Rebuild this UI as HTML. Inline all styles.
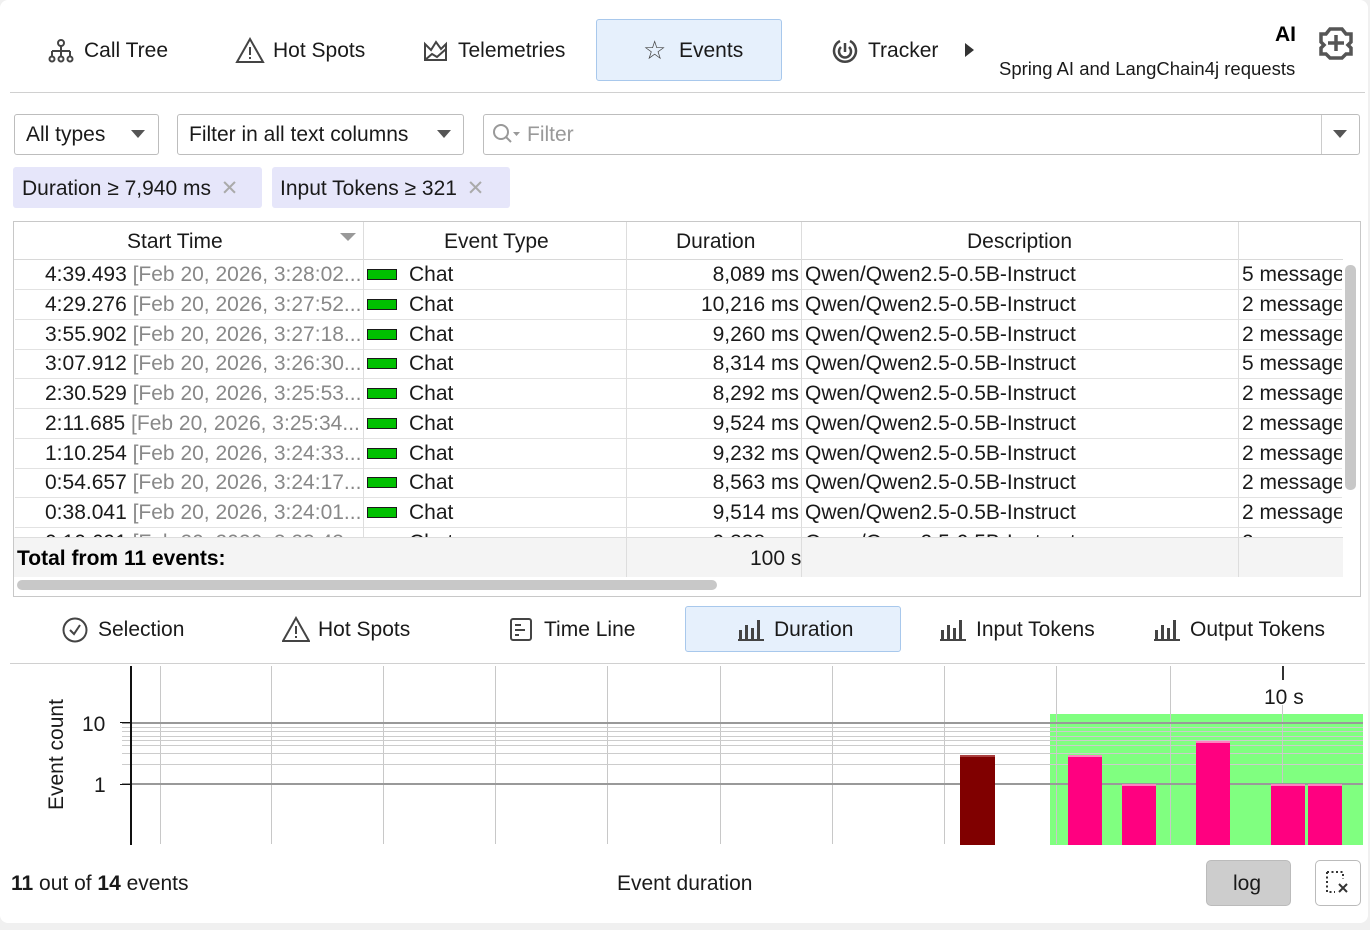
<!DOCTYPE html>
<html><head><meta charset="utf-8"><style>
*{box-sizing:border-box;margin:0;padding:0}
body{width:1370px;height:930px;background:#f0f0f0;font-family:"Liberation Sans",sans-serif;color:#1a1a1a;position:relative;overflow:hidden}
.a{position:absolute;white-space:nowrap}
.panel{position:absolute;left:0;top:0;width:1368px;height:923px;background:#fff;border-radius:8px}
.t{font-size:21px}
.box{position:absolute;border:1px solid #bdbdbd;border-radius:3px;background:#fff}
.row{position:absolute;left:15px;width:1327px;height:30px;border-bottom:1px solid #e2e2e2;font-size:21px;white-space:nowrap;overflow:hidden}
.row span{position:absolute;top:3px;white-space:nowrap}
.row span.d{right:543px;left:auto}
.g{color:#888}
.sw{position:absolute;left:352px;top:9px;width:30px;height:11px;background:#00c000;border:1.5px solid #1a1a1a}
.vl{position:absolute;top:666px;height:178px;width:1px;background:#c8c8c8}
.bar{position:absolute;background:#ff0080;border-top:2px solid #ff80c0}
</style></head><body>
<div class="panel"></div>
<svg class="a" style="left:48px;top:38px" width="26" height="26" viewBox="0 0 26 26" fill="none" stroke="#444" stroke-width="2"><circle cx="13" cy="5" r="3"/><path d="M13 8v5M4 13h18M4 13v6M13 13v6M22 13v6"/><circle cx="4" cy="21" r="2.5"/><circle cx="13" cy="21" r="2.5"/><circle cx="22" cy="21" r="2.5"/></svg>
<div class="a t" style="left:84px;top:39px">Call Tree</div>
<svg class="a" style="left:235px;top:37px" width="30" height="27" viewBox="0 0 30 27" fill="none" stroke="#444" stroke-width="2"><path d="M15 2L28 25H2Z"/><path d="M15 10v8M15 20v2"/></svg>
<div class="a t" style="left:273px;top:39px">Hot Spots</div>
<svg class="a" style="left:423px;top:40px" width="25" height="22" viewBox="0 0 25 22" fill="none" stroke="#444" stroke-width="2"><path d="M2 20V4l6 6 5-8 5 7 5-5v16Z"/><path d="M2 20l7-6 5 3 9-8" /></svg>
<div class="a t" style="left:458px;top:39px">Telemetries</div>
<div class="a" style="left:596px;top:19px;width:186px;height:62px;background:#e6f0fc;border:1.5px solid #a8c8ec;border-radius:3px"></div>
<div class="a" style="left:643px;top:35px;font-size:26px;color:#444">☆</div>
<div class="a t" style="left:679px;top:39px">Events</div>
<svg class="a" style="left:831px;top:37px" width="28" height="28" viewBox="0 0 28 28" fill="none" stroke="#444" stroke-width="2.5"><path d="M9 4A11 11 0 1 0 19 4"/><path d="M10 10a6 6 0 1 0 8 0"/><path d="M14 6v9"/></svg>
<div class="a t" style="left:868px;top:39px">Tracker</div>
<div class="a" style="left:965px;top:43px;width:0;height:0;border-left:9px solid #333;border-top:7px solid transparent;border-bottom:7px solid transparent"></div>
<div class="a" style="left:1275px;top:23px;font-size:21px;font-weight:bold;color:#000">AI</div>
<div class="a" style="left:999px;top:58px;font-size:18.5px">Spring AI and LangChain4j requests</div>
<svg class="a" style="left:1318px;top:26px" width="36" height="34" viewBox="0 0 36 34" fill="none" stroke="#555" stroke-width="3.5"><path d="M12 3h12l4 5h5v8l-3 3 3 3v6h-5l-4 4H12l-4-4H3v-6l3-3-3-3V8h5Z"/><path d="M10 17h16M18 9v16"/></svg>
<div class="a" style="left:10px;top:92px;width:1355px;height:1px;background:#d0d0d0"></div>
<div class="box" style="left:14px;top:114px;width:145px;height:41px"></div>
<div class="a t" style="left:26px;top:123px">All types</div>
<div class="a" style="left:131px;top:130px;border-top:8px solid #555;border-left:7px solid transparent;border-right:7px solid transparent"></div>
<div class="box" style="left:177px;top:114px;width:287px;height:41px"></div>
<div class="a t" style="left:189px;top:123px">Filter in all text columns</div>
<div class="a" style="left:437px;top:130px;border-top:8px solid #555;border-left:7px solid transparent;border-right:7px solid transparent"></div>
<div class="box" style="left:483px;top:114px;width:877px;height:41px"></div>
<div class="a" style="left:1321px;top:115px;width:1px;height:39px;background:#ccc"></div>
<div class="a" style="left:1333px;top:130px;border-top:8px solid #555;border-left:7px solid transparent;border-right:7px solid transparent"></div>
<svg class="a" style="left:492px;top:123px" width="32" height="24" viewBox="0 0 32 24" fill="none" stroke="#999" stroke-width="2"><circle cx="9" cy="9" r="7"/><path d="M14 14l5 5"/><path d="M21 9h7l-3.5 4z" fill="#999" stroke="none"/></svg>
<div class="a t" style="left:527px;top:123px;color:#999">Filter</div>
<div class="a" style="left:13px;top:167px;width:249px;height:41px;background:#e6e6fa;border-radius:3px"></div>
<div class="a t" style="left:22px;top:176px">Duration ≥ 7,940 ms <span style="color:#aaa;margin-left:4px">✕</span></div>
<div class="a" style="left:272px;top:167px;width:238px;height:41px;background:#e6e6fa;border-radius:3px"></div>
<div class="a t" style="left:280px;top:176px">Input Tokens ≥ 321 <span style="color:#aaa;margin-left:4px">✕</span></div>
<div class="a" style="left:13px;top:221px;width:1348px;height:376px;border:1px solid #c8c8c8;background:#fff"></div>
<div class="a" style="left:14px;top:222px;width:1329px;height:38px;border-bottom:1px solid #d8d8d8"></div>
<div class="a t" style="left:127px;top:230px">Start Time</div>
<div class="a" style="left:340px;top:233px;border-top:8px solid #999;border-left:8px solid transparent;border-right:8px solid transparent"></div>
<div class="a t" style="left:444px;top:230px">Event Type</div>
<div class="a t" style="left:676px;top:230px">Duration</div>
<div class="a t" style="left:967px;top:230px">Description</div>
<div class="row" style="top:260px"><span style="left:30px">4:39.493 <b class="g" style="font-weight:normal">[Feb 20, 2026, 3:28:02...</b></span><div class="sw"></div><span style="left:394px">Chat</span><span class="d">8,089 ms</span><span style="left:790px">Qwen/Qwen2.5-0.5B-Instruct</span><span style="left:1227px">5 messages</span></div>
<div class="row" style="top:290px"><span style="left:30px">4:29.276 <b class="g" style="font-weight:normal">[Feb 20, 2026, 3:27:52...</b></span><div class="sw"></div><span style="left:394px">Chat</span><span class="d">10,216 ms</span><span style="left:790px">Qwen/Qwen2.5-0.5B-Instruct</span><span style="left:1227px">2 messages</span></div>
<div class="row" style="top:320px"><span style="left:30px">3:55.902 <b class="g" style="font-weight:normal">[Feb 20, 2026, 3:27:18...</b></span><div class="sw"></div><span style="left:394px">Chat</span><span class="d">9,260 ms</span><span style="left:790px">Qwen/Qwen2.5-0.5B-Instruct</span><span style="left:1227px">2 messages</span></div>
<div class="row" style="top:349px"><span style="left:30px">3:07.912 <b class="g" style="font-weight:normal">[Feb 20, 2026, 3:26:30...</b></span><div class="sw"></div><span style="left:394px">Chat</span><span class="d">8,314 ms</span><span style="left:790px">Qwen/Qwen2.5-0.5B-Instruct</span><span style="left:1227px">5 messages</span></div>
<div class="row" style="top:379px"><span style="left:30px">2:30.529 <b class="g" style="font-weight:normal">[Feb 20, 2026, 3:25:53...</b></span><div class="sw"></div><span style="left:394px">Chat</span><span class="d">8,292 ms</span><span style="left:790px">Qwen/Qwen2.5-0.5B-Instruct</span><span style="left:1227px">2 messages</span></div>
<div class="row" style="top:409px"><span style="left:30px">2:11.685 <b class="g" style="font-weight:normal">[Feb 20, 2026, 3:25:34...</b></span><div class="sw"></div><span style="left:394px">Chat</span><span class="d">9,524 ms</span><span style="left:790px">Qwen/Qwen2.5-0.5B-Instruct</span><span style="left:1227px">2 messages</span></div>
<div class="row" style="top:439px"><span style="left:30px">1:10.254 <b class="g" style="font-weight:normal">[Feb 20, 2026, 3:24:33...</b></span><div class="sw"></div><span style="left:394px">Chat</span><span class="d">9,232 ms</span><span style="left:790px">Qwen/Qwen2.5-0.5B-Instruct</span><span style="left:1227px">2 messages</span></div>
<div class="row" style="top:468px"><span style="left:30px">0:54.657 <b class="g" style="font-weight:normal">[Feb 20, 2026, 3:24:17...</b></span><div class="sw"></div><span style="left:394px">Chat</span><span class="d">8,563 ms</span><span style="left:790px">Qwen/Qwen2.5-0.5B-Instruct</span><span style="left:1227px">2 messages</span></div>
<div class="row" style="top:498px"><span style="left:30px">0:38.041 <b class="g" style="font-weight:normal">[Feb 20, 2026, 3:24:01...</b></span><div class="sw"></div><span style="left:394px">Chat</span><span class="d">9,514 ms</span><span style="left:790px">Qwen/Qwen2.5-0.5B-Instruct</span><span style="left:1227px">2 messages</span></div>
<div class="row" style="top:528px"><span style="left:30px">0:10.691 <b class="g" style="font-weight:normal">[Feb 20, 2026, 3:23:43...</b></span><div class="sw"></div><span style="left:394px">Chat</span><span class="d">9,338 ms</span><span style="left:790px">Qwen/Qwen2.5-0.5B-Instruct</span><span style="left:1227px">2 messages</span></div>
<div class="a" style="left:14px;top:537px;width:1329px;height:40px;background:#f4f4f4;border-top:1px solid #ddd"></div>
<div class="a" style="left:363px;top:222px;width:1px;height:316px;background:#ddd"></div>
<div class="a" style="left:626px;top:222px;width:1px;height:355px;background:#ddd"></div>
<div class="a" style="left:801px;top:222px;width:1px;height:355px;background:#ddd"></div>
<div class="a" style="left:1238px;top:222px;width:1px;height:355px;background:#ddd"></div>
<div class="a" style="left:17px;top:547px;font-size:21px;font-weight:bold;color:#000">Total from 11 events:</div>
<div class="a t" style="left:750px;top:547px">100 s</div>
<div class="a" style="left:1345px;top:265px;width:11px;height:225px;background:#c8c8c8;border-radius:5px"></div>
<div class="a" style="left:17px;top:580px;width:700px;height:10px;background:#c8c8c8;border-radius:5px"></div>
<svg class="a" style="left:62px;top:617px" width="26" height="26" viewBox="0 0 26 26" fill="none" stroke="#444" stroke-width="2"><circle cx="13" cy="13" r="11.5"/><path d="M8 13l4 4 6-9"/></svg>
<div class="a t" style="left:98px;top:618px">Selection</div>
<svg class="a" style="left:282px;top:616px" width="28" height="27" viewBox="0 0 28 27" fill="none" stroke="#444" stroke-width="2"><path d="M14 2L27 25H1Z"/><path d="M14 10v8M14 20v2"/></svg>
<div class="a t" style="left:318px;top:618px">Hot Spots</div>
<svg class="a" style="left:509px;top:617px" width="24" height="25" viewBox="0 0 24 25" fill="none" stroke="#444" stroke-width="2"><rect x="2" y="2" width="20" height="21" rx="2"/><path d="M6 8h6M6 13h10M6 18h4"/></svg>
<div class="a t" style="left:544px;top:618px">Time Line</div>
<div class="a" style="left:685px;top:606px;width:216px;height:46px;background:#e6f0fc;border:1.5px solid #a8c8ec;border-radius:3px"></div>
<svg class="a" style="left:738px;top:618px" width="26" height="24" viewBox="0 0 26 24" fill="#444"><rect x="1" y="12" width="3" height="9"/><rect x="7" y="7" width="3" height="14"/><rect x="13" y="10" width="3" height="11"/><rect x="19" y="2" width="3" height="19"/><rect x="0" y="21" width="26" height="2"/></svg>
<div class="a t" style="left:774px;top:618px">Duration</div>
<svg class="a" style="left:940px;top:618px" width="26" height="24" viewBox="0 0 26 24" fill="#444"><rect x="1" y="12" width="3" height="9"/><rect x="7" y="7" width="3" height="14"/><rect x="13" y="10" width="3" height="11"/><rect x="19" y="2" width="3" height="19"/><rect x="0" y="21" width="26" height="2"/></svg>
<div class="a t" style="left:976px;top:618px">Input Tokens</div>
<svg class="a" style="left:1154px;top:618px" width="26" height="24" viewBox="0 0 26 24" fill="#444"><rect x="1" y="12" width="3" height="9"/><rect x="7" y="7" width="3" height="14"/><rect x="13" y="10" width="3" height="11"/><rect x="19" y="2" width="3" height="19"/><rect x="0" y="21" width="26" height="2"/></svg>
<div class="a t" style="left:1190px;top:618px">Output Tokens</div>
<div class="a" style="left:10px;top:663px;width:1355px;height:1px;background:#d0d0d0"></div>
<div class="a" style="left:1050px;top:714px;width:313px;height:131px;background:#80ff80"></div>
<div class="vl" style="left:160px"></div><div class="vl" style="left:271px"></div><div class="vl" style="left:383px"></div><div class="vl" style="left:495px"></div><div class="vl" style="left:607px"></div><div class="vl" style="left:720px"></div><div class="vl" style="left:832px"></div><div class="vl" style="left:944px"></div><div class="vl" style="left:1056px"></div><div class="vl" style="left:1170px"></div>
<div class="a" style="left:1282px;top:666px;width:2px;height:14px;background:#333"></div>
<div class="vl" style="left:1282px;top:705px;height:139px"></div>
<div class="a" style="left:122px;top:722px;width:1241px;height:2px;background:#999"></div>
<div class="a" style="left:122px;top:727px;width:1241px;height:1px;background:#ccc"></div>
<div class="a" style="left:122px;top:731px;width:1241px;height:1px;background:#ccc"></div>
<div class="a" style="left:122px;top:736px;width:1241px;height:1px;background:#ccc"></div>
<div class="a" style="left:122px;top:740px;width:1241px;height:1px;background:#ccc"></div>
<div class="a" style="left:122px;top:745px;width:1241px;height:1px;background:#ccc"></div>
<div class="a" style="left:122px;top:753px;width:1241px;height:1px;background:#ccc"></div>
<div class="a" style="left:122px;top:764px;width:1241px;height:1px;background:#ccc"></div>
<div class="a" style="left:122px;top:783px;width:1241px;height:2px;background:#999"></div>
<div class="a" style="left:130px;top:666px;width:1.5px;height:179px;background:#111"></div>
<div class="a" style="left:120px;top:722px;width:10px;height:1px;background:#111"></div>
<div class="a" style="left:120px;top:784px;width:10px;height:1px;background:#111"></div>
<div class="a t" style="left:82px;top:713px">10</div>
<div class="a t" style="left:94px;top:774px">1</div>
<div class="a t" style="left:45px;top:810px;transform:rotate(-90deg);transform-origin:0 0">Event count</div>
<div class="a t" style="left:1264px;top:686px">10 s</div>
<div class="a" style="left:960px;top:755px;width:35px;height:90px;background:#800000;border-top:2px solid #aa4040"></div>
<div class="bar" style="left:1068px;top:755px;width:34px;height:90px"></div>
<div class="bar" style="left:1122px;top:784px;width:34px;height:61px"></div>
<div class="bar" style="left:1196px;top:741px;width:34px;height:104px"></div>
<div class="bar" style="left:1271px;top:784px;width:34px;height:61px"></div>
<div class="bar" style="left:1308px;top:784px;width:34px;height:61px"></div>
<div class="a t" style="left:11px;top:872px"><b>11</b> out of <b>14</b> events</div>
<div class="a t" style="left:617px;top:872px">Event duration</div>
<div class="a" style="left:1206px;top:860px;width:85px;height:46px;background:#cdcdcd;border:1px solid #bbb;border-radius:5px"></div>
<div class="a t" style="left:1233px;top:872px">log</div>
<div class="a" style="left:1315px;top:860px;width:46px;height:46px;background:#fff;border:1px solid #bbb;border-radius:5px"></div>
<svg class="a" style="left:1325px;top:870px" width="26" height="26" viewBox="0 0 26 26" fill="none" stroke="#333" stroke-width="2"><path d="M2 2h16v7M2 2v20h8" stroke-dasharray="2 2.5"/><path d="M14 14l8 8M22 14l-8 8"/></svg>
</body></html>
